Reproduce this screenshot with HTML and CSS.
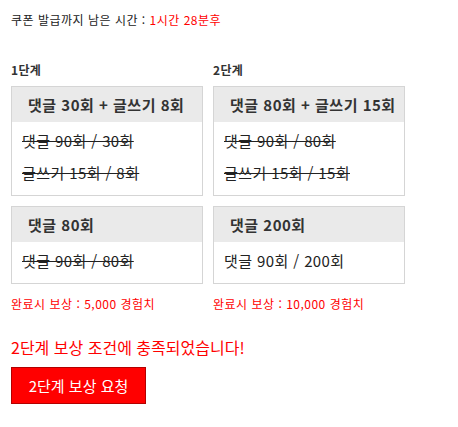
FILE: index.html
```html
<!DOCTYPE html>
<html lang="ko">
<head>
<meta charset="utf-8">
<link rel="stylesheet" href="styles.css">
</head>
<body>
<div class="page">
  <p class="timer">쿠폰 발급까지 남은 시간 : <span class="red">1시간 28분후</span></p>
  <div class="stages">
    <div class="stage">
      <div class="label">1단계</div>
      <div class="box">
        <div class="box-head">댓글 30회 + 글쓰기 8회</div>
        <div class="box-body">
          <div class="line done">댓글 90회 / 30회</div>
          <div class="line done">글쓰기 15회 / 8회</div>
        </div>
      </div>
      <div class="box">
        <div class="box-head">댓글 80회</div>
        <div class="box-body">
          <div class="line done">댓글 90회 / 80회</div>
        </div>
      </div>
      <div class="reward">완료시 보상 : 5,000 경험치</div>
    </div>
    <div class="stage">
      <div class="label">2단계</div>
      <div class="box">
        <div class="box-head">댓글 80회 + 글쓰기 15회</div>
        <div class="box-body">
          <div class="line done">댓글 90회 / 80회</div>
          <div class="line done">글쓰기 15회 / 15회</div>
        </div>
      </div>
      <div class="box">
        <div class="box-head">댓글 200회</div>
        <div class="box-body">
          <div class="line">댓글 90회 / 200회</div>
        </div>
      </div>
      <div class="reward">완료시 보상 : 10,000 경험치</div>
    </div>
  </div>
  <p class="notice">2단계 보상 조건에 충족되었습니다!</p>
  <button class="req" type="button">2단계 보상 요청</button>
</div>
</body>
</html>
```
FILE: styles.css
```css
html, body {
  margin: 0;
  padding: 0;
  background: #fff;
}
body {
  font-family: "Noto Sans CJK KR", "Noto Sans", sans-serif;
  color: #222;
}
.page {
  padding: 11px 11px;
}
.timer {
  margin: 0;
  font-size: 12px;
  line-height: 17px;
  letter-spacing: 0.5px;
  color: #222;
}
.red { color: #ff0000; }
.stages {
  display: flex;
  gap: 10px;
  margin-top: 33px;
}
.stage {
  width: 192px;
  display: flex;
  flex-direction: column;
}
.label {
  font-size: 12px;
  font-weight: bold;
  line-height: 17px;
  letter-spacing: 0.3px;
  color: #333;
  margin-bottom: 8px;
}
.box {
  border: 1px solid #d5d5d5;
  margin-bottom: 10px;
}
.box-head {
  background: #eaeaea;
  font-size: 15px;
  font-weight: bold;
  letter-spacing: 0.5px;
  color: #333;
  height: 35px;
  line-height: 35px;
  padding-left: 16px;
}
.box-body {
  padding: 3px 10px 6px 10px;
}
.line {
  font-size: 15px;
  letter-spacing: 0.4px;
  height: 32px;
  line-height: 32px;
  color: #222;
}
.line.done {
  text-decoration: line-through;
}
.reward {
  font-size: 12px;
  letter-spacing: 0.5px;
  color: #ff0000;
  line-height: 17px;
  margin-top: 1px;
}
.notice {
  margin: 25px 0 0;
  font-size: 16px;
  line-height: 20px;
  color: #ff0000;
}
.req {
  display: block;
  margin-top: 10px;
  width: 135px;
  height: 37px;
  background: #ff0000;
  border: 1px solid #b30000;
  color: #fff;
  font-family: "Noto Sans CJK KR", "Noto Sans", sans-serif;
  font-size: 15px;
  padding: 0;
  cursor: pointer;
}
```
